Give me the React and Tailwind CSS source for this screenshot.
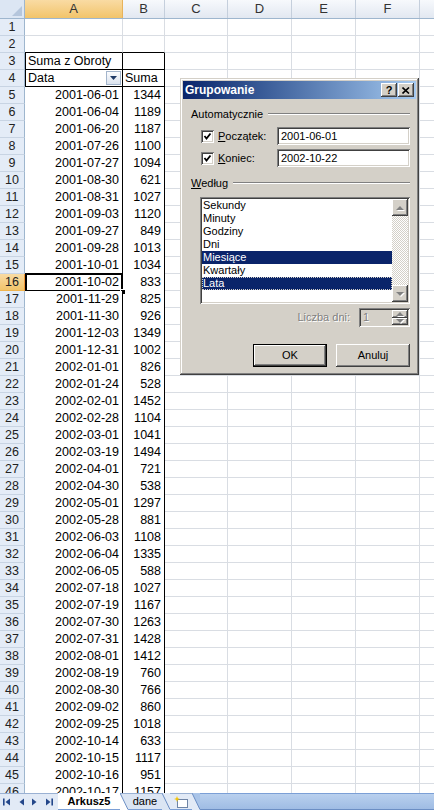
import React from "react";

const rows = [
  ["2001-06-01", 1344], ["2001-06-04", 1189], ["2001-06-20", 1187], ["2001-07-26", 1100],
  ["2001-07-27", 1094], ["2001-08-30", 621], ["2001-08-31", 1027], ["2001-09-03", 1120],
  ["2001-09-27", 849], ["2001-09-28", 1013], ["2001-10-01", 1034], ["2001-10-02", 833],
  ["2001-11-29", 825], ["2001-11-30", 926], ["2001-12-03", 1349], ["2001-12-31", 1002],
  ["2002-01-01", 826], ["2002-01-24", 528], ["2002-02-01", 1452], ["2002-02-28", 1104],
  ["2002-03-01", 1041], ["2002-03-19", 1494], ["2002-04-01", 721], ["2002-04-30", 538],
  ["2002-05-01", 1297], ["2002-05-28", 881], ["2002-06-03", 1108], ["2002-06-04", 1335],
  ["2002-06-05", 588], ["2002-07-18", 1027], ["2002-07-19", 1167], ["2002-07-30", 1263],
  ["2002-07-31", 1428], ["2002-08-01", 1412], ["2002-08-19", 760], ["2002-08-30", 766],
  ["2002-09-02", 860], ["2002-09-25", 1018], ["2002-10-14", 633], ["2002-10-15", 1117],
  ["2002-10-16", 951], ["2002-10-17", 1157],
];

const raised =
  "shadow-[inset_-1px_-1px_0_#404040,inset_1px_1px_0_#ffffff,inset_-2px_-2px_0_#808080,inset_2px_2px_0_#d4d0c8]";
const sunken =
  "shadow-[inset_1px_1px_0_#808080,inset_-1px_-1px_0_#ffffff,inset_2px_2px_0_#404040,inset_-2px_-2px_0_#d4d0c8]";

const RowHead = ({ n, selected }) => (
  <div
    className={`w-[25px] shrink-0 h-full flex items-center justify-center border-r border-b text-[#222] ${
      selected
        ? "bg-linear-to-b from-[#f9dba3] to-[#f2c469] border-r-[#f29536] border-b-[#f0b44e]"
        : "bg-[#e4ecf7] border-r-[#9eb6ce] border-b-[#c8d4e3]"
    }`}
  >
    {n}
  </div>
);

// columns C..G, plain grid cells
const Rest = () => (
  <>
    <div className="w-[63px] shrink-0 h-full border-r border-b border-[#d9dde3]" />
    <div className="w-[64px] shrink-0 h-full border-r border-b border-[#d9dde3]" />
    <div className="w-[64px] shrink-0 h-full border-r border-b border-[#d9dde3]" />
    <div className="w-[64px] shrink-0 h-full border-r border-b border-[#d9dde3]" />
    <div className="w-[14px] shrink-0 h-full border-b border-[#d9dde3]" />
  </>
);

const ColHead = ({ label, w, selected }) => (
  <div
    className={`${w} shrink-0 h-full flex items-center justify-center border-r text-[13px] text-[#333] ${
      selected
        ? "bg-linear-to-b from-[#f9dba3] to-[#f2c469] border-r-[#e8b35a]"
        : "bg-linear-to-b from-[#f7f9fc] to-[#e2e8f1] border-r-[#c5cfdc]"
    }`}
  >
    {label}
  </div>
);

const Arrow = ({ dir }) => (
  <svg width="9" height="6" viewBox="0 0 9 6">
    {dir === "up" ? (
      <>
        <polygon points="5,2 9,6 1,6" fill="#ffffff" />
        <polygon points="4,1 8,5 0,5" fill="#808080" />
      </>
    ) : (
      <>
        <polygon points="1,2 9,2 5,6" fill="#ffffff" />
        <polygon points="0,1 8,1 4,5" fill="#808080" />
      </>
    )}
  </svg>
);

const Check = () => (
  <div className={`w-[13px] h-[13px] shrink-0 bg-white ${sunken} flex items-center justify-center`}>
    <svg width="9" height="9" viewBox="0 0 9 9">
      <polyline points="1.5,4 3.5,6.5 7.5,1.5" fill="none" stroke="#000" strokeWidth="1.8" />
    </svg>
  </div>
);

function Dialog() {
  const items = ["Sekundy", "Minuty", "Godziny", "Dni", "Miesiące", "Kwartały", "Lata"];
  return (
    <div
      className={`absolute left-[180px] top-[78px] w-[239px] h-[297px] bg-[#d4d0c8] p-[3px] text-[11px] text-black shadow-[inset_-1px_-1px_0_#404040,inset_1px_1px_0_#d4d0c8,inset_-2px_-2px_0_#808080,inset_2px_2px_0_#ffffff]`}
    >
      <div className="h-[18px] flex items-center justify-between pl-[2px] pr-[2px] bg-linear-to-r from-[#0a246a] to-[#a6caf0]">
        <span className="text-white font-bold text-[12px]">Grupowanie</span>
        <div className="flex">
          <div className={`w-[16px] h-[14px] bg-[#d4d0c8] ${raised} flex items-center justify-center font-bold text-[11px] leading-none`}>
            ?
          </div>
          <div className={`w-[16px] h-[14px] bg-[#d4d0c8] ${raised} flex items-center justify-center ml-[1px]`}>
            <svg width="8" height="7" viewBox="0 0 8 7">
              <path d="M0.5 0.5 L7 6.5 M7 0.5 L0.5 6.5" stroke="#000" strokeWidth="1.6" />
            </svg>
          </div>
        </div>
      </div>

      <div className="mt-[8px] h-[14px] flex items-center pl-[8px] pr-[6px]">
        <span>Automatycznie</span>
        <div className="flex-1 ml-[5px] border-t border-b border-t-[#808080] border-b-white" />
      </div>

      <div className="mt-[6px] h-[18px] flex items-center pl-[18px] pr-[6px]">
        <Check />
        <span className="ml-[4px]">
          <u>P</u>oczątek:
        </span>
        <div className={`ml-auto w-[133px] h-full bg-white ${sunken} flex items-center pl-[4px]`}>2001-06-01</div>
      </div>

      <div className="mt-[4px] h-[18px] flex items-center pl-[18px] pr-[6px]">
        <Check />
        <span className="ml-[4px]">
          <u>K</u>oniec:
        </span>
        <div className={`ml-auto w-[133px] h-full bg-white ${sunken} flex items-center pl-[4px]`}>2002-10-22</div>
      </div>

      <div className="mt-[9px] h-[14px] flex items-center pl-[8px] pr-[6px]">
        <span>
          <u>W</u>edług
        </span>
        <div className="flex-1 ml-[5px] border-t border-b border-t-[#808080] border-b-white" />
      </div>

      <div className={`mt-[7px] ml-[17px] mr-[6px] h-[107px] bg-white ${sunken} flex p-[2px]`}>
        <div className="flex-1 flex flex-col">
          {items.map((it) => (
            <div
              key={it}
              className={`h-[13px] leading-[13px] pl-[1px] ${
                it === "Miesiące"
                  ? "bg-[#0a246a] text-white"
                  : it === "Lata"
                  ? "bg-[#0a246a] text-white outline-1 outline-dotted outline-[#d4d0c8] -outline-offset-1"
                  : ""
              }`}
            >
              {it}
            </div>
          ))}
        </div>
        <div className="w-[16px] flex flex-col bg-[image:repeating-conic-gradient(#d4d0c8_0_25%,#ffffff_0_50%)] bg-[length:2px_2px]">
          <div className={`h-[17px] bg-[#d4d0c8] ${raised} flex items-center justify-center`}>
            <Arrow dir="up" />
          </div>
          <div className="flex-1" />
          <div className={`h-[17px] bg-[#d4d0c8] ${raised} flex items-center justify-center`}>
            <Arrow dir="down" />
          </div>
        </div>
      </div>

      <div className="mt-[4px] h-[19px] flex items-center justify-end pr-[6px]">
        <span className="text-[#808080] [text-shadow:1px_1px_0_#ffffff]">Liczba dni:</span>
        <div className={`ml-[9px] w-[51px] h-full bg-[#d4d0c8] ${sunken} flex items-center p-[2px]`}>
          <span className="flex-1 pl-[2px] text-[#808080] [text-shadow:1px_1px_0_#ffffff]">1</span>
          <div className="w-[16px] h-full flex flex-col">
            <div className={`flex-1 bg-[#d4d0c8] ${raised} flex items-center justify-center`}>
              <Arrow dir="up" />
            </div>
            <div className={`flex-1 bg-[#d4d0c8] ${raised} flex items-center justify-center`}>
              <Arrow dir="down" />
            </div>
          </div>
        </div>
      </div>

      <div className="mt-[17px] flex justify-end gap-[9px] pr-[6px]">
        <div className="w-[74px] h-[23px] border border-black">
          <div className={`w-full h-full bg-[#d4d0c8] ${raised} flex items-center justify-center`}>OK</div>
        </div>
        <div className={`w-[74px] h-[23px] bg-[#d4d0c8] ${raised} flex items-center justify-center`}>Anuluj</div>
      </div>
    </div>
  );
}

const NavTri = ({ flip, bar }) => (
  <svg width="8" height="8" viewBox="0 0 8 8" className={flip ? "-scale-x-100" : ""}>
    {bar && <rect x="0" y="0.5" width="1.6" height="7" fill="#24478a" />}
    <polygon points="2.5,4 7,0.5 7,7.5" fill="#24478a" />
  </svg>
);

function Tabs() {
  return (
    <div className="h-[17px] shrink-0 flex text-[11px] text-black">
      <div className="w-[58px] shrink-0 bg-[#e2eaf6] border-t border-[#9ab1d3] flex items-center pl-[3px] gap-[6px]">
        <NavTri bar />
        <NavTri />
        <NavTri flip />
        <NavTri flip bar />
      </div>
      <div className="w-[62px] shrink-0 bg-white flex items-center justify-center font-bold border-b border-[#7b9fd6]">
        Arkusz5
      </div>
      <svg width="8" height="17" viewBox="0 0 8 17" className="shrink-0">
        <rect width="8" height="17" fill="#dbe5f3" />
        <polygon points="0,0 0,17 8,17 8,16" fill="#ffffff" />
        <line x1="0" y1="0.5" x2="8" y2="0.5" stroke="#9ab1d3" />
        <line x1="0" y1="0" x2="8" y2="16.5" stroke="#6b8ec4" />
      </svg>
      <div className="w-[34px] shrink-0 bg-[#dbe5f3] border-t border-b border-t-[#9ab1d3] border-b-[#7b9fd6] flex items-center justify-center">
        dane
      </div>
      <svg width="8" height="17" viewBox="0 0 8 17" className="shrink-0">
        <rect width="8" height="17" fill="#e2eaf6" />
        <polygon points="0,0 0,17 8,17" fill="#dbe5f3" />
        <line x1="0" y1="0" x2="8" y2="16.5" stroke="#6b8ec4" />
      </svg>
      <div className="w-[22px] shrink-0 bg-[#e2eaf6] border-t border-b border-t-[#9ab1d3] border-b-[#7b9fd6] flex items-center justify-center">
        <svg width="14" height="12" viewBox="0 0 14 12">
          <rect x="3.5" y="3.5" width="10" height="8" fill="#ffffff" stroke="#6f85a6" />
          <path d="M3 0 L3.8 2.2 L6 3 L3.8 3.8 L3 6 L2.2 3.8 L0 3 L2.2 2.2 Z" fill="#f5c400" />
        </svg>
      </div>
      <svg width="8" height="17" viewBox="0 0 8 17" className="shrink-0">
        <rect width="8" height="17" fill="#a9c4e8" />
        <polygon points="0,0 0,17 8,17" fill="#e2eaf6" />
        <line x1="0" y1="0" x2="8" y2="16.5" stroke="#6b8ec4" />
      </svg>
      <div className="flex-1 bg-linear-to-b from-[#b9d0ee] to-[#9fbce4] border-t border-b border-t-[#7b9fd6] border-b-[#6b8ec4]" />
    </div>
  );
}

export default function App() {
  return (
    <div className="w-[434px] h-[810px] flex flex-col overflow-hidden bg-white font-['Liberation_Sans',Arial,sans-serif]">
      <div className="relative flex-1 min-h-0 overflow-hidden text-[12.5px] text-black">
        <div className="flex h-[19px] border-b border-[#9eb6ce]">
          <div className="w-[25px] shrink-0 h-full bg-[#dce6f3] border-r border-[#9eb6ce] flex items-end justify-end p-[2px]">
            <svg width="10" height="10" viewBox="0 0 10 10">
              <polygon points="10,0 10,10 0,10" fill="#b5c6dc" />
            </svg>
          </div>
          <ColHead label="A" w="w-[98px]" selected />
          <ColHead label="B" w="w-[42px]" />
          <ColHead label="C" w="w-[63px]" />
          <ColHead label="D" w="w-[64px]" />
          <ColHead label="E" w="w-[64px]" />
          <ColHead label="F" w="w-[64px]" />
          <div className="w-[14px] shrink-0 h-full bg-linear-to-b from-[#f7f9fc] to-[#e2e8f1]" />
        </div>

        {[1, 2].map((n) => (
          <div key={n} className="flex h-[17px]">
            <RowHead n={n} />
            <div className={`w-[98px] shrink-0 h-full border-r border-b border-r-[#d9dde3] ${n === 2 ? "border-b-black" : "border-b-[#d9dde3]"}`} />
            <div className={`w-[42px] shrink-0 h-full border-r border-b border-r-[#d9dde3] ${n === 2 ? "border-b-black" : "border-b-[#d9dde3]"}`} />
            <Rest />
          </div>
        ))}

        <div className="flex h-[17px]">
          <RowHead n={3} />
          <div className="w-[98px] shrink-0 h-full border-l border-r border-b border-black flex items-center pl-[2px] whitespace-nowrap overflow-hidden">
            Suma z Obroty
          </div>
          <div className="w-[42px] shrink-0 h-full border-r border-b border-black" />
          <Rest />
        </div>

        <div className="flex h-[17px]">
          <RowHead n={4} />
          <div className="w-[98px] shrink-0 h-full border-l border-r border-b border-black flex items-center justify-between pl-[2px] pr-[1px]">
            <span>Data</span>
            <div className="w-[15px] h-[14px] border border-[#a3b5cc] bg-linear-to-b from-[#fbfcfe] to-[#dbe3ee] flex items-center justify-center">
              <svg width="7" height="4" viewBox="0 0 7 4">
                <polygon points="0,0 7,0 3.5,4" fill="#1f3a66" />
              </svg>
            </div>
          </div>
          <div className="w-[42px] shrink-0 h-full border-r border-b border-black flex items-center pl-[2px] overflow-hidden whitespace-nowrap">
            Suma
          </div>
          <Rest />
        </div>

        {rows.map(([d, v], i) => {
          const n = i + 5;
          const sel = n === 16;
          return (
            <div key={n} className="flex h-[17px]">
              <RowHead n={n} selected={sel} />
              <div className="relative w-[98px] shrink-0 h-full bg-white border-r border-black flex items-center justify-end pr-[3px]">
                {d}
                {sel && (
                  <>
                    <div className="absolute left-0 top-[-1px] right-[-1px] bottom-[-1px] border-2 border-black" />
                    <div className="absolute right-[-4px] bottom-[-4px] w-[6px] h-[6px] bg-black border border-white" />
                  </>
                )}
              </div>
              <div className="w-[42px] shrink-0 h-full bg-white border-r border-black flex items-center justify-end pr-[3px]">
                {v}
              </div>
              <Rest />
            </div>
          );
        })}

        <Dialog />
      </div>
      <Tabs />
    </div>
  );
}
